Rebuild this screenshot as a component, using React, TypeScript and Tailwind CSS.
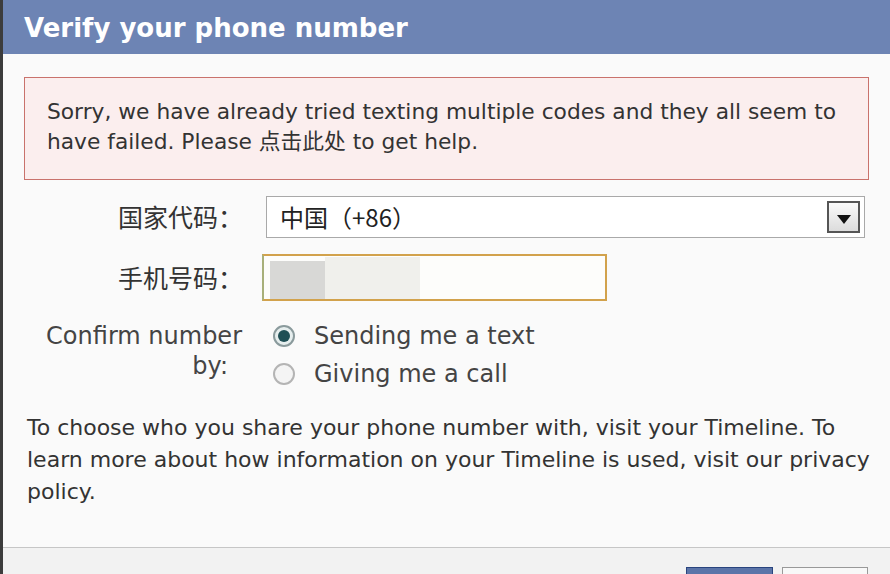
const dv = "font-['DejaVu_Sans','Noto_Sans_CJK_SC',sans-serif]";
const cjk = "font-['Noto_Sans_CJK_SC',sans-serif]";

const Radio = ({ checked }: { checked: boolean }) => (
  <span
    className={`flex h-[22px] w-[22px] items-center justify-center rounded-full border-2 ${
      checked ? "border-[#8a9a9c] bg-[#e6eeee]" : "border-[#b4b4b4] bg-[#f4f4f4]"
    }`}
  >
    {checked && <span className="h-[12px] w-[12px] rounded-full bg-[#1f4f55]" />}
  </span>
);

export default function App() {
  return (
    <div className="flex h-[574px] w-[890px] overflow-hidden bg-[#3c3c3c] pl-[3px]">
      <div className="flex min-w-0 flex-1 flex-col bg-[#fafafa]">
        {/* header */}
        <div className="flex h-[54px] items-center bg-[#6d84b4] pl-[21px]">
          <h1 className={`${dv} mt-[2px] text-[26px] font-bold text-white`}>
            Verify your phone number
          </h1>
        </div>

        <div className="flex flex-1 flex-col px-[21px] pt-[23px]">
          {/* error */}
          <div
            className={`${dv} h-[103px] border border-[#c9726c] bg-[#fbeeee] px-[22px] pt-[19px] text-[21.75px] leading-[30px] text-[#333]`}
          >
            Sorry, we have already tried texting multiple codes and they all seem to
            <br />
            have failed. Please 点击此处 to get help.
          </div>

          {/* country code */}
          <div className="mt-[16px] flex items-center">
            <span className={`${cjk} w-[242px] shrink-0 pr-[23px] text-right text-[25px] text-[#333]`}>
              国家代码：
            </span>
            <div className="flex h-[42px] w-[599px] items-center justify-between border border-[#a9a9a9] bg-white pl-[13px] pr-[4px]">
              <span className={`${cjk} text-[24px] text-[#222]`}>中国（+86）</span>
              <span className="flex h-[32px] w-[33px] items-end justify-center border-2 border-[#555] bg-gradient-to-b from-[#fafafa] to-[#dcdcdc] pb-[7px]">
                <svg width="14" height="9" viewBox="0 0 14 9">
                  <path d="M0 0h14L7 9z" fill="#111" />
                </svg>
              </span>
            </div>
          </div>

          {/* phone */}
          <div className="mt-[16px] flex items-center">
            <span className={`${cjk} w-[238px] shrink-0 pr-[19px] text-right text-[25px] text-[#333]`}>
              手机号码：
            </span>
            <div className="flex h-[47px] w-[345px] items-end border-2 border-[#d2a24c] border-l-[#a8b07a] bg-[#fdfdfb] pl-[6px]">
              <div className="h-[38px] w-[55px] bg-[#d8d8d6]" />
              <div className="h-[42px] w-[95px] bg-[#f0f0ec]" />
            </div>
          </div>

          {/* confirm */}
          <div className={`${dv} mt-[20px] flex text-[24px] text-[#444]`}>
            <div className="w-[221px] shrink-0 whitespace-nowrap pr-[3px] text-right leading-[30px]">
              Confirm number
              <br />
              <span className="pr-[14px]">by:</span>
            </div>
            <div className="flex flex-col gap-[8px] pl-[28px]">
              <label className="flex h-[30px] items-center gap-[19px] whitespace-nowrap">
                <Radio checked />
                <span>Sending me a text</span>
              </label>
              <label className="flex h-[30px] items-center gap-[19px] whitespace-nowrap">
                <Radio checked={false} />
                <span>Giving me a call</span>
              </label>
            </div>
          </div>

          {/* info */}
          <p className={`${dv} mt-[23px] whitespace-nowrap pl-[3px] text-[22px] leading-[32px] text-[#333]`}>
            To choose who you share your phone number with, visit your Timeline. To
            <br />
            learn more about how information on your Timeline is used, visit our privacy
            <br />
            policy.
          </p>
        </div>

        {/* footer */}
        <div className="flex h-[27px] shrink-0 items-start justify-end gap-[9px] border-t border-[#c6c6c6] bg-[#f2f2f2] pr-[22px] pt-[19px]">
          <button className="h-[30px] w-[87px] border border-[#29447e] bg-[#5b74a8]" />
          <button className="h-[30px] w-[86px] border border-[#999] bg-[#f8f8f8]" />
        </div>
      </div>
    </div>
  );
}
